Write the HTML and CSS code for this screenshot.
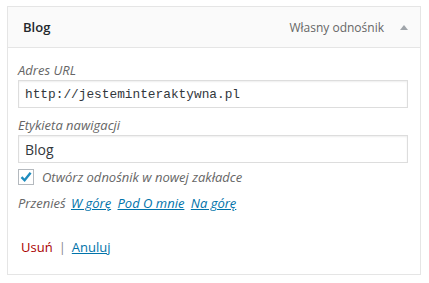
FILE: index.html
```html
<!DOCTYPE html>
<html>
<head>
    <title>Blog</title>
    <link rel="stylesheet" href="styles.css">
</head>
<body>
    <div class="menu-item">
        <div class="item-bar">
            <span class="item-title">Blog</span>
            <span class="item-type">Własny odnośnik</span>
            <span class="item-arrow"></span>
        </div>
        <div class="item-settings">
            <label class="field-label">Adres URL</label>
            <input class="field-input mono" type="text" value="http://jesteminteraktywna.pl">
            <label class="field-label spaced">Etykieta nawigacji</label>
            <input class="field-input" type="text" value="Blog">
            <div class="check-row">
                <span class="checkbox">
                    <svg width="14" height="14" viewBox="0 0 14 14">
                        <path d="M2.5 7.2 L5.6 10.3 L11.6 2.8" fill="none" stroke="#1e8cbe" stroke-width="2.4"/>
                    </svg>
                </span>
                <span class="check-text">Otwórz odnośnik w nowej zakładce</span>
            </div>
            <div class="move-row">
                Przenieś <a href="#">W górę</a> <a href="#">Pod O mnie</a> <a href="#">Na górę</a>
            </div>
            <div class="actions">
                <a class="delete" href="#">Usuń</a><span class="sep">|</span><a class="cancel" href="#">Anuluj</a>
            </div>
        </div>
    </div>
</body>
</html>
```

FILE: styles.css
```css
body {
    margin: 0;
    padding: 6px 9px 0 7px;
    font-family: 'Open Sans', sans-serif;
    font-size: 13px;
    color: #444;
    background-color: #fff;
}
.menu-item {
    width: 412px;
    border: 1px solid #e5e5e5;
    background-color: #fff;
}
.item-bar {
    display: flex;
    align-items: center;
    height: 40px;
    padding: 0 12px 0 15px;
    background-color: #fafafa;
    border-bottom: 1px solid #e5e5e5;
}
.item-title {
    flex: 1;
    font-weight: 600;
    color: #23282d;
}
.item-type {
    font-size: 12px;
    color: #666;
}
.item-arrow {
    width: 0;
    height: 0;
    margin-left: 16px;
    border-left: 4px solid transparent;
    border-right: 4px solid transparent;
    border-bottom: 5px solid #a0a5aa;
}
.item-settings {
    padding: 13px 12px 17px 10px;
}
.field-label {
    display: block;
    font-style: italic;
    color: #666;
    line-height: 19px;
}
.field-label.spaced {
    margin-top: 8px;
}
.field-input {
    display: block;
    box-sizing: border-box;
    width: 100%;
    height: 28px;
    margin: 0;
    padding: 0 6px;
    border: 1px solid #ddd;
    box-shadow: inset 0 1px 2px rgba(0, 0, 0, 0.07);
    font-family: 'Open Sans', sans-serif;
    font-size: 14px;
    color: #32373c;
    background-color: #fff;
    outline: none;
}
.field-input.mono {
    font-family: 'Liberation Mono', monospace;
    font-size: 12.8px;
}
.check-row {
    display: flex;
    align-items: center;
    margin-top: 6px;
    height: 16px;
}
.checkbox {
    display: flex;
    align-items: center;
    justify-content: center;
    box-sizing: border-box;
    width: 16px;
    height: 16px;
    border: 1px solid #b4b9be;
    background-color: #fff;
}
.check-text {
    margin-left: 8px;
    font-style: italic;
    color: #666;
}
.move-row {
    margin-top: 8px;
    line-height: 20px;
    font-style: italic;
    color: #666;
}
.move-row a {
    margin-left: 2px;
    margin-right: 1px;
    color: #0073aa;
}
.actions {
    margin-top: 24px;
    padding-left: 3px;
    line-height: 20px;
}
.delete {
    color: #a00;
    text-decoration: none;
}
.sep {
    margin: 0 5px 0 6px;
    color: #888;
}
.cancel {
    padding: 0 1px;
    color: #0073aa;
}
```
